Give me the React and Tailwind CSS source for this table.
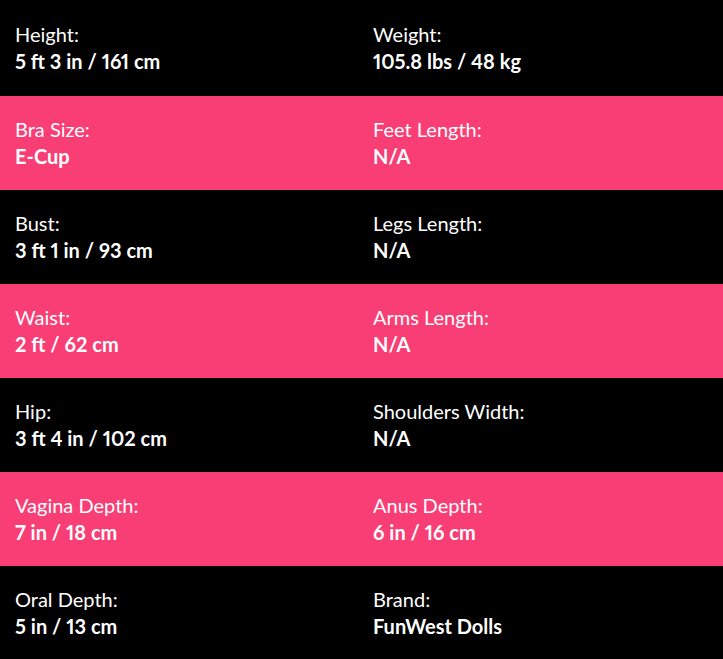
const rows = [
  ['Height:', '5 ft 3 in / 161 cm', 'Weight:', '105.8 lbs / 48 kg'],
  ['Bra Size:', 'E-Cup', 'Feet Length:', 'N/A'],
  ['Bust:', '3 ft 1 in / 93 cm', 'Legs Length:', 'N/A'],
  ['Waist:', '2 ft / 62 cm', 'Arms Length:', 'N/A'],
  ['Hip:', '3 ft 4 in / 102 cm', 'Shoulders Width:', 'N/A'],
  ['Vagina Depth:', '7 in / 18 cm', 'Anus Depth:', '6 in / 16 cm'],
  ['Oral Depth:', '5 in / 13 cm', 'Brand:', 'FunWest Dolls'],
]

function Cell({ label, value }) {
  return (
    <div className="px-[15px] flex flex-col justify-center proportional-nums">
      <span className="text-[20px] leading-[27px]">{label}</span>
      <span className="text-[20px] leading-[27px] font-bold">{value}</span>
    </div>
  )
}

export default function App() {
  return (
    <div className="w-[723px] h-[659px] overflow-hidden bg-black text-white" style={{ fontFamily: 'Lato, "Open Sans", sans-serif' }}>
      {rows.map((r, i) => (
        <div
          key={i}
          className={
            'grid grid-cols-[358px_1fr] ' +
            (i === 0 ? 'h-[96px] ' : 'h-[94px] ') +
            (i % 2 === 1 ? 'bg-[#f93d75]' : 'bg-black')
          }
        >
          <Cell label={r[0]} value={r[1]} />
          <Cell label={r[2]} value={r[3]} />
        </div>
      ))}
    </div>
  )
}
